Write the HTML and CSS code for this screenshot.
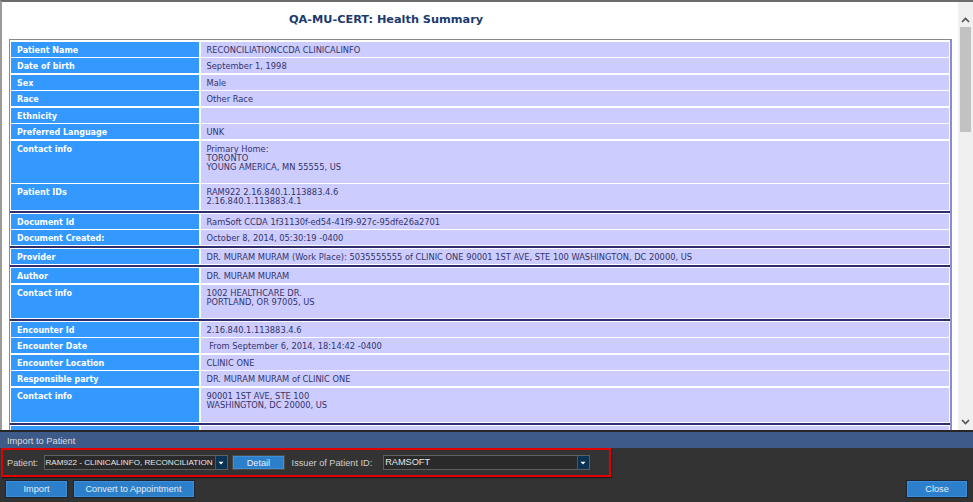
FILE: index.html
```html
<!DOCTYPE html>
<html>
<head>
<meta charset="utf-8">
<link rel="stylesheet" href="styles.css">
</head>
<body>
<div class="window">
  <div class="viewer">
    <div class="doc">
      <div class="title">QA-MU-CERT: Health Summary</div>
      <div class="sheet">
        <div class="sec first">
          <div class="row"><div class="k">Patient Name</div><div class="v">RECONCILIATIONCCDA CLINICALINFO</div></div>
          <div class="row"><div class="k">Date of birth</div><div class="v">September 1, 1998</div></div>
          <div class="row"><div class="k">Sex</div><div class="v">Male</div></div>
          <div class="row"><div class="k">Race</div><div class="v">Other Race</div></div>
          <div class="row"><div class="k">Ethnicity</div><div class="v"></div></div>
          <div class="row"><div class="k">Preferred Language</div><div class="v">UNK</div></div>
          <div class="row h42"><div class="k">Contact info</div><div class="v">Primary Home:<br>TORONTO<br>YOUNG AMERICA, MN 55555, US</div></div>
          <div class="row h25"><div class="k">Patient IDs</div><div class="v">RAM922 2.16.840.1.113883.4.6<br>2.16.840.1.113883.4.1</div></div>
        </div>
        <div class="sec">
          <div class="row"><div class="k">Document Id</div><div class="v">RamSoft CCDA 1f31130f-ed54-41f9-927c-95dfe26a2701</div></div>
          <div class="row"><div class="k">Document Created:</div><div class="v">October 8, 2014, 05:30:19 -0400</div></div>
        </div>
        <div class="sec">
          <div class="row"><div class="k">Provider</div><div class="v">DR. MURAM MURAM (Work Place): 5035555555 of CLINIC ONE 90001 1ST AVE, STE 100 WASHINGTON, DC 20000, US</div></div>
        </div>
        <div class="sec">
          <div class="row"><div class="k">Author</div><div class="v">DR. MURAM MURAM</div></div>
          <div class="row h33"><div class="k">Contact info</div><div class="v">1002 HEALTHCARE DR.<br>PORTLAND, OR 97005, US</div></div>
        </div>
        <div class="sec">
          <div class="row"><div class="k">Encounter Id</div><div class="v">2.16.840.1.113883.4.6</div></div>
          <div class="row"><div class="k">Encounter Date</div><div class="v">&nbsp;From September 6, 2014, 18:14:42 -0400</div></div>
          <div class="row"><div class="k">Encounter Location</div><div class="v">CLINIC ONE</div></div>
          <div class="row"><div class="k">Responsible party</div><div class="v">DR. MURAM MURAM of CLINIC ONE</div></div>
          <div class="row h34"><div class="k">Contact info</div><div class="v">90001 1ST AVE, STE 100<br>WASHINGTON, DC 20000, US</div></div>
        </div>
        <div class="sec">
          <div class="row"><div class="k">&nbsp;</div><div class="v">&nbsp;</div></div>
        </div>
      </div>
    </div>
    <div class="scrollbar">
      <div class="sb-btn"><svg width="9" height="6" viewBox="0 0 9 6"><path d="M1 5 L4.5 1.5 L8 5" fill="none" stroke="#505050" stroke-width="1.6"/></svg></div>
      <div class="sb-track"><div class="sb-thumb"></div></div>
      <div class="sb-btn"><svg width="9" height="6" viewBox="0 0 9 6"><path d="M1 1 L4.5 4.5 L8 1" fill="none" stroke="#505050" stroke-width="1.6"/></svg></div>
    </div>
  </div>
  <div class="importbar">
    <div class="hdr">Import to Patient</div>
    <div class="pbody">
      <div class="redbox">
        <span class="lbl lbl-patient">Patient:</span>
        <div class="combo combo1">
          <div class="combo-text tight">RAM922 - CLINICALINFO, RECONCILIATION</div>
          <div class="combo-btn"><svg width="6" height="4" viewBox="0 0 6 4"><path d="M0.5 0.8 L5.5 0.8 L3 3.4 Z" fill="#ffffff"/></svg></div>
        </div>
        <div class="btn btn-detail">Detail</div>
        <span class="lbl lbl-issuer">Issuer of Patient ID:</span>
        <div class="combo combo2">
          <div class="combo-text">RAMSOFT</div>
          <div class="combo-btn"><svg width="6" height="4" viewBox="0 0 6 4"><path d="M0.5 0.8 L5.5 0.8 L3 3.4 Z" fill="#ffffff"/></svg></div>
        </div>
      </div>
      <div class="actions">
        <div class="btn btn-import">Import</div>
        <div class="btn btn-convert">Convert to Appointment</div>
        <div class="btn btn-close">Close</div>
      </div>
    </div>
  </div>
</div>
</body>
</html>
```
FILE: styles.css
```css
* { box-sizing: border-box; }
html, body { margin: 0; padding: 0; }
body {
  width: 973px;
  height: 502px;
  overflow: hidden;
  background: #333333;
  font-family: "DejaVu Sans", Verdana, sans-serif;
}
.window {
  display: flex;
  flex-direction: column;
  height: 502px;
}
.viewer {
  height: 430px;
  display: flex;
  border-top: 2px solid #6c6c6c;
  border-left: 2px solid #9a9a9a;
  background: #ffffff;
  overflow: hidden;
}
.doc {
  flex: 1;
  overflow: hidden;
  background: #ffffff;
}
.title {
  height: 37px;
  padding-left: 287px;
  padding-top: 10.5px;
  font-size: 11.3px;
  line-height: 14px;
  font-weight: bold;
  color: #1b3a6d;
}
.sheet {
  margin: 0 5px 0 7px;
  border-top: 1px solid #888888;
  border-left: 1px solid #8a8a8a;
  border-right: 2px solid #8c8cd2;
  background: #ffffff;
}
.sec {
  padding: 1px 1px 1px 1px;
  border-bottom: 2px solid #2e2e6e;
  display: flex;
  flex-direction: column;
  gap: 1.5px;
}
.sec.first { padding-top: 1.5px; }
.row {
  display: grid;
  grid-template-columns: 188px 1fr;
  column-gap: 1.5px;
  height: 15px;
}
.row.h42 { height: 42px; }
.row.h25 { height: 25.5px; }
.row.h33 { height: 33px; }
.row.h34 { height: 34px; }
.k {
  background: #3399ff;
  color: #ffffff;
  font-weight: bold;
  font-size: 8px;
  line-height: 9px;
  padding: 4.2px 6px 0 6px;
  white-space: nowrap;
  overflow: hidden;
}
.v {
  background: #ccccff;
  color: #33336a;
  font-size: 8.3px;
  line-height: 9.2px;
  padding: 4px 6px 0 6px;
  white-space: nowrap;
  overflow: hidden;
}
.scrollbar {
  width: 15px;
  background: #f0f0f0;
  display: flex;
  flex-direction: column;
  margin-left: 1px;
}
.sb-btn {
  height: 17px;
  display: flex;
  align-items: center;
  justify-content: center;
}
.sb-btn:first-child { padding-top: 12px; height: 24px; }
.sb-track {
  flex: 1;
  padding: 1px 2px;
}
.sb-thumb {
  height: 105px;
  background: #c2c2c2;
}
.importbar {
  flex: 1;
  display: flex;
  flex-direction: column;
  border-top: 2px solid #262626;
  font-family: "Liberation Sans", Arial, sans-serif;
}
.hdr {
  height: 16px;
  background: #3d5a88;
  color: #dcdcdc;
  font-size: 9.3px;
  line-height: 19px;
  padding-left: 7px;
}
.pbody {
  flex: 1;
  background: #333333;
  display: flex;
  flex-direction: column;
}
.redbox {
  margin-left: 1px;
  width: 610px;
  height: 29px;
  border: 2px solid #e20000;
  box-shadow: 1px 1px 1px rgba(0,0,0,0.5);
  display: flex;
  align-items: center;
  padding-left: 4px;
}
.lbl {
  color: #cfcfcf;
  font-size: 9.2px;
  white-space: nowrap;
}
.lbl-patient { width: 36.5px; }
.lbl-issuer { width: 91.6px; margin-left: 6.7px; }
.combo {
  display: flex;
  height: 15px;
  border: 1px solid #5e5e5e;
  background: #2a2a2a;
}
.combo1 { width: 184.4px; }
.combo2 { width: 206.7px; }
.combo-text {
  flex: 1;
  color: #e6e6e6;
  font-size: 9.2px;
  line-height: 13px;
  padding-left: 1px;
  white-space: nowrap;
  overflow: hidden;
}
.combo-text.tight {
  font-size: 8.1px;
  padding-left: 1px;
}
.combo-btn {
  width: 12px;
  background: #0d3354;
  border-left: 1px solid #555555;
  display: flex;
  align-items: center;
  justify-content: center;
}
.btn {
  display: flex;
  align-items: center;
  justify-content: center;
  background: #2c7fca;
  border: 1px solid #1c2433;
  box-shadow: inset 0 0 0 1px #3f8fd6;
  color: #e4eef8;
  font-size: 9.2px;
  white-space: nowrap;
}
.btn-detail {
  width: 53px;
  height: 15.5px;
  margin-left: 4px;
  border-color: #4a4a4a;
}
.actions {
  display: flex;
  align-items: center;
  margin-top: 2.5px;
  padding: 0 5px 0 5px;
  height: 19px;
}
.btn-import { width: 63px; height: 17.5px; }
.btn-convert { width: 122px; height: 17.5px; margin-left: 4.5px; }
.btn-close { width: 62px; height: 18.5px; margin-left: auto; }
```
